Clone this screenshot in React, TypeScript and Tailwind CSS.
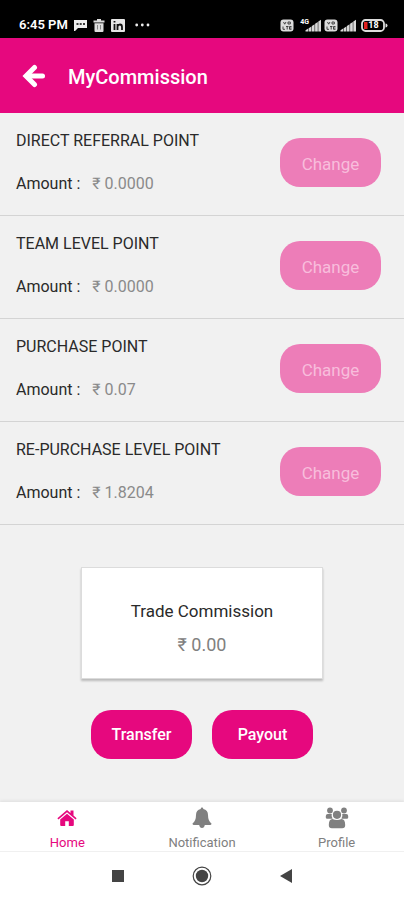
import type { ReactNode } from 'react';

interface Commission {
  title: string;
  amount: string;
}

const commissions: Commission[] = [
  { title: 'DIRECT REFERRAL POINT', amount: '0.0000' },
  { title: 'TEAM LEVEL POINT', amount: '0.0000' },
  { title: 'PURCHASE POINT', amount: '0.07' },
  { title: 'RE-PURCHASE LEVEL POINT', amount: '1.8204' },
];

function VoLteIcon() {
  return (
    <svg width="14" height="13" viewBox="0 0 14 13" aria-hidden="true">
      <rect x="0.5" y="0.5" width="13" height="12" rx="3" fill="#dcdcdc" />
      <path d="M3.500 3l1.200 2.200L6 3M8 3h2.300v2H8zM3 7.500v2.800h2M6 7.500h2.500M7.200 7.500v3M11.500 7.500h-2v2.800h2M9.500 9h2" fill="none" stroke="#333" strokeWidth="0.9" />
    </svg>
  );
}

function SignalIcon() {
  return (
    <svg width="17" height="13" viewBox="0 0 17 13" aria-hidden="true" fill="#d8d8d8">
      <path d="M0.500 12.500v-1.200l2.700-1.800v3zM3.700 12.500V9.200L6.400 7.400v5.100zM6.900 12.500V7L9.600 5.200v7.300zM10.100 12.500V4.800L12.800 3v9.500zM13.300 12.500V2.600L16 .8v11.700z" />
    </svg>
  );
}

function StatusBar() {
  return (
    <div className="flex h-[38px] items-center justify-between bg-black pt-3 pr-4 pl-[19px] text-white">
      <div className="flex items-center gap-1.5">
        <span className="text-[13px] leading-4 font-semibold">6:45 PM</span>
        <svg width="13" height="12" viewBox="0 0 13 12" aria-hidden="true">
          <path d="M0 1h13v8H4l-3 3H0z" fill="#eee" />
          <path d="M2.500 5h2M5.700 5h2M9 5h2" stroke="#000" strokeWidth="1.500" />
        </svg>
        <svg width="12" height="13" viewBox="0 0 12 13" aria-hidden="true">
          <path d="M4 0h4v1.500h3.500v2H.5v-2H4zM1.500 4.200h9V12q0 1-1 1h-7q-1 0-1-1z" fill="#ddd" />
          <path d="M4.500 6v4.500M7.500 6v4.500" stroke="#888" />
        </svg>
        <svg width="14" height="13" viewBox="0 0 14 13" aria-hidden="true">
          <rect width="14" height="13" rx="1" fill="#e5e5e5" />
          <path d="M3.500 5v6M3.500 2v1.500M6.500 5v6M6.500 7.500Q7 5.500 9 5.500T11 8v3" fill="none" stroke="#111" strokeWidth="1.800" />
        </svg>
        <svg className="ml-1" width="15" height="4" viewBox="0 0 15 4" aria-hidden="true" fill="#eee">
          <circle cx="1.700" cy="2" r="1.400" />
          <circle cx="7.300" cy="2" r="1.400" />
          <circle cx="13" cy="2" r="1.400" />
        </svg>
      </div>
      <div className="flex items-center gap-0.5">
        <VoLteIcon />
        <div className="flex items-start pl-1">
          <span className="-mr-1 text-[7px] leading-[7px] font-bold">4G</span>
          <SignalIcon />
        </div>
        <VoLteIcon />
        <SignalIcon />
        <div className="relative ml-0.5 flex">
          <svg width="27" height="13" viewBox="0 0 27 13" aria-hidden="true">
            <rect x="1" y="1" width="22" height="11" rx="3.500" fill="#000" stroke="#ddd" strokeWidth="1.800" />
            <rect x="3" y="3" width="3.500" height="7" fill="#e02020" />
            <path d="M24.500 4.500q2 0 2 2t-2 2z" fill="#ddd" />
          </svg>
          <span className="absolute inset-0 pr-0.5 text-center text-[9px] leading-[13px] font-bold">18</span>
        </div>
      </div>
    </div>
  );
}

function HomeIcon() {
  return (
    <svg width="20" height="18" viewBox="0 0 20 18" aria-hidden="true" fill="currentColor">
      <path d="M10 1L13.500 4V1.500h3V6.600L19.600 9.300 18.600 10.500 10 3.300 1.400 10.500.4 9.300z" />
      <path d="M10 4.800l6.800 5.600V16q0 1-1 1h-4v-4.800H8.200V17h-4q-1 0-1-1v-5.600z" />
    </svg>
  );
}

function BellIcon() {
  return (
    <svg width="20" height="22" viewBox="0 0 20 22" aria-hidden="true" fill="currentColor">
      <path d="M10 .5q1.300 0 1.300 1.400 4.700 1 4.700 6.100 0 6 3.500 8.500 0 1.500-1.500 1.500H2q-1.500 0-1.500-1.500Q4 14 4 8q0-5.100 4.700-6.100Q8.700.5 10 .5zM7.200 18h5.600q-.5 3-2.800 3t-2.800-3z" />
    </svg>
  );
}

function ProfileIcon() {
  return (
    <svg width="24" height="22" viewBox="0 0 24 22" aria-hidden="true" fill="currentColor">
      <circle cx="5" cy="3.500" r="2.900" />
      <circle cx="19" cy="3.500" r="2.900" />
      <path d="M.8 10.500V9q0-2 2-2h4q-.8 2.400.8 4.700H2.300q-1.500 0-1.500-1.200zM23.200 10.500V9q0-2-2-2h-4q.8 2.400-.8 4.700h5.300q1.500 0 1.500-1.200z" />
      <circle cx="12" cy="7.800" r="4.100" />
      <path d="M3.800 18q0-6 3.700-6 4.500 2.200 9 0 3.700 0 3.700 6 0 3.200-3 3.200H6.800q-3 0-3-3.200z" />
    </svg>
  );
}

interface TabProps {
  label: string;
  active?: boolean;
  children: ReactNode;
}

function Tab({ label, active, children }: TabProps) {
  return (
    <a
      href="#"
      aria-current={active ? 'page' : undefined}
      className={`flex flex-1 flex-col items-center gap-[5px] pt-1 text-[13px] leading-4 ${
        active ? 'text-[#e6087e]' : 'text-[#808080]'
      }`}
    >
      <span className="flex h-6 items-center">{children}</span>
      {label}
    </a>
  );
}

export default function App() {
  return (
    <div className="flex min-h-screen flex-col bg-[#f1f1f1] font-[Roboto,sans-serif]">
      <StatusBar />

      <header className="flex h-[75px] items-center gap-5 bg-[#e6087e] px-5 text-white">
        <button aria-label="Back" className="flex w-7 justify-center">
          <svg width="24" height="24" viewBox="0 0 24 24" aria-hidden="true" fill="none" stroke="currentColor" strokeWidth="5" strokeLinecap="round">
            <path d="M12.500 3.500L4 12l8.500 8.500" />
            <path d="M5 12h15.500" />
          </svg>
        </button>
        <h1 className="pt-0.5 text-xl font-medium">MyCommission</h1>
      </header>

      <main className="flex-1">
        {/* Points */}
        <ul>
          {commissions.map(c => (
            <li
              key={c.title}
              className="flex items-center justify-between border-b border-[#d4d4d4] pt-4 pr-[23px] pb-[19px] pl-4"
            >
              <div className="flex flex-col gap-[19px] text-base leading-6">
                <h2 className="text-[#2a2a2a]">{c.title}</h2>
                <p className="flex gap-3 text-[#2a2a2a]">
                  Amount :<span className="text-[#8a8a8a]">₹ {c.amount}</span>
                </p>
              </div>
              <button disabled className="h-[49px] w-[101px] rounded-[20px] bg-[#ed7db8] pt-1 text-[17px] text-[#f8bddc]">
                Change
              </button>
            </li>
          ))}
        </ul>

        {/* Trade */}
        <section className="mx-auto mt-[42px] w-3/5 border border-[#dcdcdc] bg-white pt-[27px] pb-[15px] text-center shadow-[0_2px_2px_#bbb]">
          <h2 className="text-[17px] leading-8 text-[#2a2a2a]">Trade Commission</h2>
          <p className="text-lg leading-9 text-[#808080]">₹ 0.00</p>
        </section>
        <div className="mt-[31px] mb-10 flex justify-center gap-5">
          <button className="h-[49px] w-[101px] rounded-[20px] bg-[#e6087e] text-base font-medium text-white">Transfer</button>
          <button className="h-[49px] w-[101px] rounded-[20px] bg-[#e6087e] text-base font-medium text-white">Payout</button>
        </div>
      </main>

      <nav className="flex h-[50px] border-b border-[#f0f0f0] bg-white shadow-[0_-1px_3px_#ddd]">
        <Tab label="Home" active>
          <HomeIcon />
        </Tab>
        <Tab label="Notification">
          <BellIcon />
        </Tab>
        <Tab label="Profile">
          <ProfileIcon />
        </Tab>
      </nav>

      {/* Boutons système */}
      <div className="flex h-12 items-center justify-center gap-[67px] bg-white text-[#444]">
        <button aria-label="Recent apps">
          <svg width="16" height="14" viewBox="0 0 16 14" fill="currentColor">
            <rect x="3" y="1" width="12" height="12" />
          </svg>
        </button>
        <button aria-label="Home screen">
          <svg width="20" height="20" viewBox="0 0 20 20" fill="currentColor">
            <circle cx="10" cy="10" r="8.800" fill="none" stroke="currentColor" strokeWidth="1.200" />
            <circle cx="10" cy="10" r="6.200" />
          </svg>
        </button>
        <button aria-label="Previous screen">
          <svg width="16" height="14" viewBox="0 0 16 14" fill="currentColor">
            <path d="M13 0v14L1 7z" />
          </svg>
        </button>
      </div>
    </div>
  );
}
